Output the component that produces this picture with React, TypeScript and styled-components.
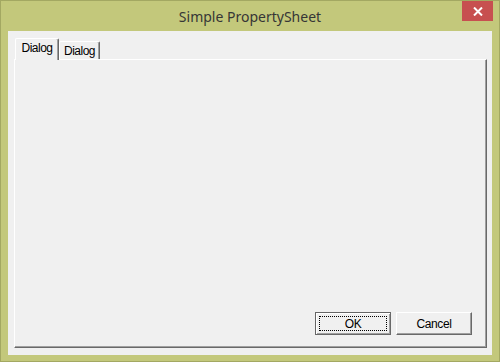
import React, { ReactElement } from 'react';
import styled, { createGlobalStyle } from 'styled-components';

const GlobalStyle = createGlobalStyle`
  html, body {
    margin: 0;
    padding: 0;
    background: #ffffff;
  }
`;

const Window = styled.div`
  box-sizing: border-box;
  width: 500px;
  height: 362px;
  border: 1px solid #a3a862;
  background: #c3c87b;
  display: flex;
  flex-direction: column;
  padding: 0 7px 6px 7px;
`;

const TitleBar = styled.div`
  height: 30px;
  margin: 0 -7px;
  display: grid;
  grid-template-columns: 1fr auto 1fr;
  flex-shrink: 0;
`;

const Title = styled.div`
  grid-column: 2;
  align-self: center;
  font-family: 'Noto Sans', 'Open Sans', sans-serif;
  font-size: 14px;
  color: #363636;
  white-space: nowrap;
`;

const CloseButton = styled.div`
  grid-column: 3;
  justify-self: end;
  align-self: start;
  width: 31px;
  height: 20px;
  margin-right: 6px;
  background: #c75050;
  display: flex;
  align-items: center;
  justify-content: center;
`;

const Client = styled.div`
  flex: 1;
  background: #f0f0f0;
  padding: 7px 5px 7px 6px;
  display: flex;
  flex-direction: column;
`;

const TabRow = styled.div`
  display: flex;
  align-items: flex-end;
  padding-left: 1px;
  margin-bottom: -1px;
  position: relative;
  z-index: 1;
`;

const Tab = styled.div<{ $active?: boolean }>`
  box-sizing: border-box;
  width: ${(p) => (p.$active ? '44px' : '41px')};
  height: ${(p) => (p.$active ? '22px' : '18px')};
  margin-bottom: ${(p) => (p.$active ? '0' : '1px')};
  padding-top: 2px;
  text-align: center;
  background: #f0f0f0;
  border-top: 1px solid #ffffff;
  border-left: 1px solid #ffffff;
  border-right: 1px solid #696969;
  box-shadow: inset -1px 0 #a0a0a0;
  border-radius: 2px 2px 0 0;
  font-family: 'Liberation Sans', Arial, sans-serif;
  font-size: 12px;
  letter-spacing: -0.5px;
  line-height: 14px;
  color: #000000;
`;

const Panel = styled.div`
  box-sizing: border-box;
  width: 473px;
  height: 289px;
  border-top: 1px solid #ffffff;
  border-left: 1px solid #ffffff;
  border-right: 1px solid #696969;
  border-bottom: 1px solid #696969;
  box-shadow: inset -1px -1px #a0a0a0;
  display: flex;
  justify-content: flex-end;
  align-items: flex-end;
  gap: 5px;
  padding: 0 14px 12px 0;
`;

const Button = styled.div<{ $default?: boolean }>`
  box-sizing: border-box;
  position: relative;
  width: 76px;
  height: 23px;
  display: flex;
  align-items: center;
  justify-content: center;
  background: #f0f0f0;
  font-family: 'Liberation Sans', Arial, sans-serif;
  font-size: 12px;
  letter-spacing: -0.4px;
  color: #000000;
  border: 1px solid ${(p) => (p.$default ? '#646464' : '#ffffff')};
  border-right-color: #696969;
  border-bottom-color: #696969;
  box-shadow: ${(p) =>
    p.$default
      ? 'inset 1px 1px #ffffff, inset -1px -1px #a0a0a0'
      : 'inset -1px -1px #a0a0a0'};

  &::after {
    content: '';
    display: ${(p) => (p.$default ? 'block' : 'none')};
    position: absolute;
    inset: 3px;
    border: 1px dotted #000000;
  }
`;

function App(): ReactElement {
  return (
    <>
      <GlobalStyle />
      <Window>
        <TitleBar>
          <Title>Simple PropertySheet</Title>
          <CloseButton>
            <svg width="10" height="9" viewBox="0 0 10 9">
              <path d="M1 0.5 L9 8.5 M9 0.5 L1 8.5" stroke="#ffffff" strokeWidth="2" />
            </svg>
          </CloseButton>
        </TitleBar>
        <Client>
          <TabRow>
            <Tab $active>Dialog</Tab>
            <Tab>Dialog</Tab>
          </TabRow>
          <Panel>
            <Button $default>OK</Button>
            <Button>Cancel</Button>
          </Panel>
        </Client>
      </Window>
    </>
  );
}

export default App;
